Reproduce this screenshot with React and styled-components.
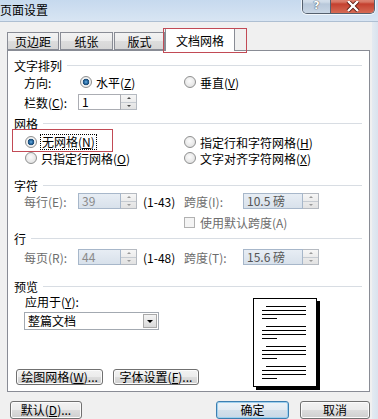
import styled, { createGlobalStyle } from "styled-components";

const GlobalStyle = createGlobalStyle`
  html, body {
    margin: 0;
    padding: 0;
    background: #f0f0f0;
  }
  body {
    font-family: "Noto Sans CJK SC", "Noto Sans", sans-serif;
    font-size: 12px;
    color: #000;
  }
`;

const Window = styled.div`
  width: 378px;
  height: 419px;
  overflow: hidden;
  display: flex;
  flex-direction: column;
  background: #f0f0f0;
`;

const TitleBar = styled.div`
  height: 22px;
  box-sizing: border-box;
  display: flex;
  align-items: flex-start;
  background: linear-gradient(#c6d9ee, #d8e5f3);
  border-bottom: 1px solid #aebfd2;
`;

const Title = styled.div`
  line-height: 19px;
  font-size: 12px;
  color: #000;
`;

const CaptionGroup = styled.div`
  display: flex;
  height: 20px;
  margin: -7px 3px 0 auto;
  border: 1px solid #55606e;
  border-top: none;
  border-radius: 0 0 5px 5px;
  overflow: hidden;
  box-shadow: 0 0 0 1px rgba(255, 255, 255, 0.7);
`;

const CaptionButton = styled.div`
  width: ${(p) => p.$w}px;
  display: flex;
  align-items: flex-end;
  justify-content: center;
  padding-bottom: 1px;
  box-sizing: border-box;
  background: ${(p) =>
    p.$close
      ? "linear-gradient(#eeb0a4, #d77664 45%, #c4402f 55%, #d66b55)"
      : "linear-gradient(#e6edf5, #cfdbe8 45%, #b8c8da 55%, #c9d6e5)"};

  & + & {
    border-left: 1px solid #55606e;
  }
`;

const HelpGlyph = styled.span`
  font-family: "DejaVu Sans", sans-serif;
  font-weight: bold;
  font-size: 11px;
  line-height: 12px;
  color: #fff;
  text-shadow: 0 0 1px #3c4a5a, 0 0 1px #3c4a5a;
`;

const Body = styled.div`
  flex: 1;
  display: flex;
`;

const Main = styled.div`
  width: 372px;
  box-sizing: border-box;
  padding: 6px 2px 0 7px;
  display: flex;
  flex-direction: column;
`;

const FrameEdge = styled.div`
  width: 6px;
  background: linear-gradient(90deg, #e4eaf1, #d9e3ee);
`;

const TabRow = styled.div`
  display: flex;
  align-items: flex-end;
  height: 22px;
`;

const Tab = styled.div`
  position: relative;
  width: ${(p) => p.$w}px;
  height: ${(p) => (p.$active ? 23 : 18)}px;
  margin-right: ${(p) => p.$gap || 0}px;
  margin-bottom: ${(p) => (p.$active ? -1 : 0)}px;
  box-sizing: border-box;
  border: 1px solid #898c95;
  border-bottom: ${(p) => (p.$active ? "none" : "1px solid #898c95")};
  background: ${(p) =>
    p.$active ? "#fff" : "linear-gradient(#f3f3f3, #ebebeb 50%, #dddddd 50%, #d6d6d6)"};
  display: flex;
  align-items: center;
  justify-content: center;
  padding-top: ${(p) => (p.$active ? 0 : 1)}px;
  z-index: ${(p) => (p.$active ? 2 : 1)};
`;

const Mark = styled.div`
  position: absolute;
  left: ${(p) => p.$l}px;
  top: ${(p) => p.$t}px;
  width: ${(p) => p.$w}px;
  height: ${(p) => p.$h}px;
  border: 1px solid #c24a55;
  box-sizing: border-box;
  pointer-events: none;
`;

const Panel = styled.div`
  width: 363px;
  height: 342px;
  box-sizing: border-box;
  border: 1px solid #898c95;
  background: #fff;
  display: flex;
  flex-direction: column;
  padding-right: 7px;
`;

const Heading = styled.div`
  display: flex;
  align-items: center;
  height: 14px;
  margin-top: ${(p) => p.$mt}px;
  padding-left: 6px;

  &::after {
    content: "";
    flex: 1;
    height: 1px;
    margin-left: 5px;
    background: #d8dde3;
  }
`;

const Row = styled.div`
  display: flex;
  align-items: center;
  height: 16px;
  margin-top: ${(p) => p.$mt}px;
  padding-left: 16px;
`;

const Cell = styled.div`
  display: flex;
  align-items: center;
  width: ${(p) => (p.$w ? `${p.$w}px` : "auto")};
  flex: none;
  padding-left: ${(p) => p.$pl || 0}px;
  box-sizing: border-box;
  color: ${(p) => (p.$dim ? "#6d6d6d" : "#000")};
`;

const Radio = styled.span`
  width: 12px;
  height: 12px;
  flex: none;
  box-sizing: border-box;
  border-radius: 50%;
  border: 1px solid #8e8f8f;
  margin-right: 4px;
  background: ${(p) =>
    p.$checked
      ? "radial-gradient(circle at 50% 50%, #6fb2e6 0, #2d6fa6 1.6px, #1b4a75 3px, #f4f4f4 3.6px, #e6e6e6 100%)"
      : "radial-gradient(circle at 45% 40%, #fbfbfb 0, #e6e6e6 65%, #d2d2d2 100%)"};
`;

const CheckBox = styled.span`
  width: 11px;
  height: 11px;
  flex: none;
  box-sizing: border-box;
  border: 1px solid #b1b1b1;
  background: #f4f4f4;
  margin-right: 5px;
`;

const FocusText = styled.span`
  position: relative;
  outline: 1px dotted #000;
  outline-offset: 0;
  padding: 0 1px;
  line-height: 14px;
`;

const SpinBox = styled.div`
  display: flex;
  width: ${(p) => p.$w}px;
  height: 16px;
  flex: none;
`;

const SpinField = styled.div`
  flex: 1;
  box-sizing: border-box;
  border: 1px solid ${(p) => (p.$disabled ? "#a7b7ca" : "#abadb3")};
  background: ${(p) => (p.$disabled ? "linear-gradient(#e7edf4, #d8e1eb)" : "#fff")};
  color: ${(p) => (p.$disabled ? p.$tone || "#8a8a8a" : "#000")};
  padding-left: 3px;
  line-height: 14px;
`;

const SpinArrows = styled.div`
  width: 16px;
  box-sizing: border-box;
  border: 1px solid #b5bac1;
  border-left: none;
  display: flex;
  flex-direction: column;
  background: linear-gradient(#f6f6f6, #e2e2e2);
`;

const SpinHalf = styled.div`
  flex: 1;
  display: flex;
  align-items: center;
  justify-content: center;

  & + & {
    border-top: 1px solid #c6cbd1;
  }
`;

const Tri = styled.span`
  width: 0;
  height: 0;
  border-left: ${(p) => p.$s || 3}px solid transparent;
  border-right: ${(p) => p.$s || 3}px solid transparent;
  ${(p) =>
    p.$up
      ? `border-bottom: ${p.$s || 3}px solid ${p.$c || "#5a5a5a"};`
      : `border-top: ${p.$s || 3}px solid ${p.$c || "#5a5a5a"};`}
`;

const Range = styled.span`
  margin-left: 6px;
`;

const PreviewArea = styled.div`
  display: flex;
`;

const PreviewLeft = styled.div`
  width: 245px;
  display: flex;
  flex-direction: column;
  padding-left: 8px;
  box-sizing: border-box;
`;

const ApplyLabel = styled.div`
  margin: 2px 0 0 9px;
  height: 14px;
  line-height: 14px;
`;

const Select = styled.div`
  display: flex;
  width: 135px;
  height: 18px;
  margin: 3px 0 0 8px;
  box-sizing: border-box;
  border: 1px solid #a3a9b1;
  background: #fff;
`;

const SelectText = styled.div`
  flex: 1;
  padding-left: 3px;
  line-height: 16px;
`;

const SelectButton = styled.div`
  width: 14px;
  margin: 1px;
  box-sizing: border-box;
  border: 1px solid #a9a9a9;
  background: linear-gradient(#f4f4f4, #dadada);
  display: flex;
  align-items: center;
  justify-content: center;
`;

const ButtonRow = styled.div`
  display: flex;
  gap: 10px;
  margin-top: ${(p) => p.$mt}px;
`;

const Button = styled.div`
  width: ${(p) => p.$w}px;
  height: ${(p) => p.$h || 16}px;
  margin-left: ${(p) => p.$ml || 0}px;
  box-sizing: border-box;
  border: 1px solid ${(p) => (p.$default ? "#3c7fb1" : "#707070")};
  border-radius: 3px;
  background: ${(p) =>
    p.$default
      ? "linear-gradient(#edf3f8, #e2ebf3 50%, #d3e0eb 50%, #c9d8e6)"
      : "linear-gradient(#f2f2f2, #ebebeb 50%, #dddddd 50%, #cfcfcf)"};
  box-shadow: inset 0 0 0 1px ${(p) => (p.$default ? "#9fd0ee" : "#fbfbfb")};
  display: flex;
  align-items: center;
  justify-content: center;
  line-height: 1;
  white-space: nowrap;
  flex: none;
`;

const Page = styled.div`
  width: 64px;
  height: 89px;
  margin-top: 5px;
  box-sizing: border-box;
  border: 1px solid #000;
  background: #fff;
  box-shadow: 3px 3px 0 #000;
  padding: 7px 0 0 8px;
  display: flex;
  flex-direction: column;
  gap: 7px;
`;

const Para = styled.div`
  display: flex;
  flex-direction: column;
  gap: 3px;
`;

const TextLine = styled.div`
  height: 1px;
  width: ${(p) => p.$w}px;
  margin-left: ${(p) => p.$ml || 0}px;
  background: #000;
`;

const Footer = styled.div`
  display: flex;
  margin-top: 9px;
`;

function Spinner({ w, value, disabled, tone }) {
  return (
    <SpinBox $w={w}>
      <SpinField $disabled={disabled} $tone={tone}>
        {value}
      </SpinField>
      <SpinArrows>
        <SpinHalf>
          <Tri $up $s={2.5} $c={disabled ? "#9a9a9a" : "#4a4a4a"} />
        </SpinHalf>
        <SpinHalf>
          <Tri $s={2.5} $c={disabled ? "#9a9a9a" : "#4a4a4a"} />
        </SpinHalf>
      </SpinArrows>
    </SpinBox>
  );
}

function PreviewPage() {
  return (
    <Page>
      {[0, 1, 2, 3].map((i) => (
        <Para key={i}>
          <TextLine $w={40} $ml={4} />
          <TextLine $w={44} />
          <TextLine $w={44} />
          <TextLine $w={15} />
        </Para>
      ))}
    </Page>
  );
}

export default function App() {
  return (
    <>
      <GlobalStyle />
      <Window>
        <TitleBar>
          <Title>页面设置</Title>
          <CaptionGroup>
            <CaptionButton $w={27}>
              <HelpGlyph>?</HelpGlyph>
            </CaptionButton>
            <CaptionButton $w={44} $close>
              <svg width="14" height="11" viewBox="0 0 14 11">
                <path d="M2 0 L12 10 M12 0 L2 10" stroke="#5a1a12" strokeWidth="4" />
                <path d="M2 0 L12 10 M12 0 L2 10" stroke="#fff" strokeWidth="2.4" />
              </svg>
            </CaptionButton>
          </CaptionGroup>
        </TitleBar>

        <Body>
          <Main>
            <TabRow>
              <Tab $w={52} $gap={1}>页边距</Tab>
              <Tab $w={53} $gap={1}>纸张</Tab>
              <Tab $w={51}>版式</Tab>
              <Tab $w={70} $active>
                文档网格
                <Mark $l={-3} $t={-1} $w={84} $h={25} />
              </Tab>
            </TabRow>

            <Panel>
              <Heading $mt={7}>文字排列</Heading>
              <Row $mt={2}>
                <Cell $w={54}>方向:</Cell>
                <Cell $w={106} $pl={2}>
                  <Radio $checked />
                  水平(<u>Z</u>)
                </Cell>
                <Cell>
                  <Radio />
                  垂直(<u>V</u>)
                </Cell>
              </Row>
              <Row $mt={4}>
                <Cell $w={54}>栏数(<u>C</u>):</Cell>
                <Spinner w={59} value="1" />
              </Row>

              <Heading $mt={6}>网格</Heading>
              <Row $mt={4}>
                <Cell $w={160} $pl={1}>
                  <Radio $checked />
                  <FocusText>
                    无网格(<u>N</u>)
                    <Mark $l={-29} $t={-6} $w={101} $h={23} />
                  </FocusText>
                </Cell>
                <Cell>
                  <Radio />
                  指定行和字符网格(<u>H</u>)
                </Cell>
              </Row>
              <Row $mt={0}>
                <Cell $w={160} $pl={1}>
                  <Radio />
                  只指定行网格(<u>O</u>)
                </Cell>
                <Cell>
                  <Radio />
                  文字对齐字符网格(<u>X</u>)
                </Cell>
              </Row>

              <Heading $mt={12}>字符</Heading>
              <Row $mt={1}>
                <Cell $w={54} $dim>每行(E):</Cell>
                <Cell $w={106}>
                  <Spinner w={59} value="39" disabled />
                  <Range>(1-43)</Range>
                </Cell>
                <Cell $w={59} $dim>跨度(I):</Cell>
                <Spinner w={76} value="10.5 磅" disabled tone="#555" />
              </Row>
              <Row $mt={5}>
                <Cell $w={160} />
                <Cell $dim>
                  <CheckBox />
                  使用默认跨度(A)
                </Cell>
              </Row>

              <Heading $mt={1}>行</Heading>
              <Row $mt={4}>
                <Cell $w={54} $dim>每页(R):</Cell>
                <Cell $w={106}>
                  <Spinner w={59} value="44" disabled />
                  <Range>(1-48)</Range>
                </Cell>
                <Cell $w={59} $dim>跨度(T):</Cell>
                <Spinner w={76} value="15.6 磅" disabled tone="#555" />
              </Row>

              <Heading $mt={14}>预览</Heading>
              <PreviewArea>
                <PreviewLeft>
                  <ApplyLabel>应用于(<u>Y</u>):</ApplyLabel>
                  <Select>
                    <SelectText>整篇文档</SelectText>
                    <SelectButton>
                      <Tri $s={3.5} $c="#000" />
                    </SelectButton>
                  </Select>
                  <ButtonRow $mt={39}>
                    <Button $w={87}>绘图网格(<u>W</u>)...</Button>
                    <Button $w={86}>字体设置(<u>F</u>)...</Button>
                  </ButtonRow>
                </PreviewLeft>
                <PreviewPage />
              </PreviewArea>
            </Panel>

            <Footer>
              <Button $w={72} $h={18} $ml={3}>
                默认(<u>D</u>)...
              </Button>
              <Button $w={73} $h={18} $ml={134} $default>
                确定
              </Button>
              <Button $w={70} $h={18} $ml={11}>
                取消
              </Button>
            </Footer>
          </Main>
          <FrameEdge />
        </Body>
      </Window>
    </>
  );
}
